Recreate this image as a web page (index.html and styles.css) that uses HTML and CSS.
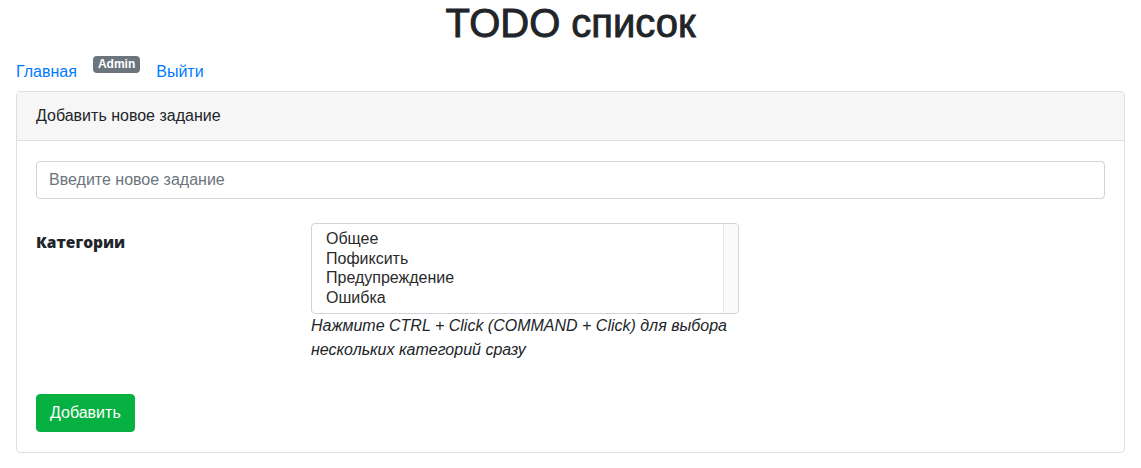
FILE: index.html
```html
<!DOCTYPE html>
<html lang="ru">
<head>
<meta charset="utf-8">
<title>TODO список</title>
<link rel="stylesheet" href="styles.css">
</head>
<body>
<div class="container">
  <h1 class="title">TODO список</h1>
  <nav class="nav">
    <a href="#" class="nav-link">Главная</a>
    <span class="badge">Admin</span>
    <a href="#" class="nav-link">Выйти</a>
  </nav>
  <div class="card">
    <div class="card-header">Добавить новое задание</div>
    <div class="card-body">
      <input class="form-control" type="text" placeholder="Введите новое задание">
      <div class="row">
        <label class="row-label">Категории</label>
        <div class="row-field">
          <div class="listbox">
            <div class="options">
              <div class="option">Общее</div>
              <div class="option">Пофиксить</div>
              <div class="option">Предупреждение</div>
              <div class="option">Ошибка</div>
            </div>
            <div class="scrollbar"></div>
          </div>
          <p class="help">Нажмите CTRL + Click (COMMAND + Click) для выбора нескольких категорий сразу</p>
        </div>
      </div>
      <button class="btn" type="button">Добавить</button>
    </div>
  </div>
</div>
</body>
</html>
```

FILE: styles.css
```css
* { box-sizing: border-box; }
html, body { margin: 0; padding: 0; }
body {
  font-family: "Liberation Sans", Arial, sans-serif;
  font-size: 16px;
  line-height: 24px;
  color: #212529;
  background: #fff;
}
.container {
  padding: 0 16px;
}
.title {
  margin: 0;
  font-family: "Liberation Sans", Arial, sans-serif;
  font-size: 40px;
  line-height: 46px;
  font-weight: 400;
  -webkit-text-stroke: 0.9px #212529;
  text-align: center;
  color: #212529;
}
.nav {
  display: flex;
  align-items: flex-start;
  gap: 16px;
  padding: 14px 0 7px;
}
.nav-link {
  color: #007bff;
  text-decoration: none;
  line-height: 24px;
}
.badge {
  margin-top: -4px;
  background: #6c757d;
  color: #fff;
  font-size: 12px;
  font-weight: 700;
  line-height: 12px;
  padding: 2px 5px 3px;
  border-radius: 4px;
}
.card {
  border: 1px solid #dedede;
  border-radius: 4px;
}
.card-header {
  background: #f6f6f6;
  border-bottom: 1px solid #dedede;
  padding: 12px 19px;
  line-height: 24px;
}
.card-body {
  padding: 20px 19px;
}
.form-control {
  display: block;
  width: 100%;
  height: 38px;
  padding: 6px 12px;
  font-family: inherit;
  font-size: 16px;
  color: #495057;
  border: 1px solid #ced4da;
  border-radius: 4px;
  outline: none;
}
.form-control::placeholder { color: #6c757d; }
.row {
  display: flex;
  margin-top: 24px;
}
.row-label {
  width: 275px;
  flex: none;
  padding-top: 7px;
  font-family: "Open Sans", "Liberation Sans", sans-serif;
  font-weight: 800;
  font-size: 15.5px;
}
.row-field {
  width: 428px;
}
.listbox {
  display: flex;
  height: 91px;
  border: 1px solid #ced4da;
  border-radius: 4px;
  overflow: hidden;
}
.options {
  flex: 1;
  padding: 5px 14px;
  color: #2b2b2b;
}
.option {
  line-height: 19.5px;
}
.scrollbar {
  width: 15px;
  flex: none;
  background: #fafafa;
  border-left: 1px solid #e8e8e8;
}
.help {
  margin: 0;
  font-style: italic;
  line-height: 24px;
}
.btn {
  display: block;
  margin-top: 32px;
  height: 38px;
  padding: 6px 13px;
  font-family: inherit;
  font-size: 16px;
  line-height: 24px;
  color: #fff;
  background: #06b141;
  border: 1px solid #06b141;
  border-radius: 4px;
}
```
